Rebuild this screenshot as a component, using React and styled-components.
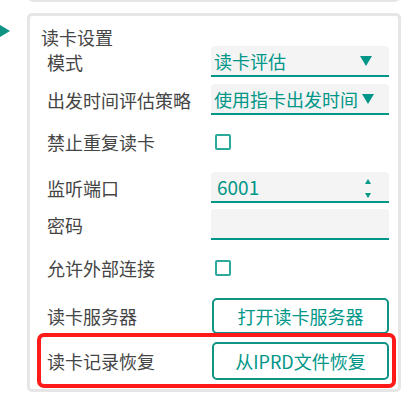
import styled, { createGlobalStyle } from "styled-components";

const GlobalStyle = createGlobalStyle`
  body {
    margin: 0;
    background: #ffffff;
    font-family: "Noto Sans CJK SC", "Noto Sans", sans-serif;
  }
  * {
    box-sizing: border-box;
  }
`;

const teal = "#009688";

const Page = styled.div`
  display: flex;
  width: 417px;
  height: 419px;
  overflow: hidden;
`;

const Side = styled.div`
  width: 27px;
  padding-top: 18px;
  flex-shrink: 0;
`;

const Main = styled.div`
  width: 374px;
  display: flex;
  flex-direction: column;
`;

const PrevBox = styled.div`
  height: 12px;
  margin: -10px 1px 0;
  border: 3px solid #e6e6e6;
  border-radius: 5px;
`;

const Panel = styled.div`
  margin-top: 11px;
  border: 3px solid #e6e6e6;
  border-radius: 5px;
  padding: 13px 9px 1px 17px;
  display: flex;
  flex-direction: column;
`;

const Title = styled.div`
  margin-left: -6px;
  font-size: 18px;
  line-height: 17px;
  height: 17px;
  color: #454545;
`;

const Row = styled.div`
  display: flex;
  align-items: center;
  height: ${(p) => p.$h || 31}px;
  margin-top: ${(p) => p.$mt || 0}px;
`;

const MarkedRow = styled(Row)`
  margin-left: -10px;
  width: 359px;
  border: 4px solid #ff1a1a;
  border-radius: 7px;
  padding-left: 6px;
`;

const Label = styled.div`
  width: 164px;
  flex-shrink: 0;
  font-size: 18px;
  line-height: 1;
  color: #454545;
`;

const Field = styled.div`
  width: 178px;
  height: 31px;
  display: flex;
  align-items: center;
  justify-content: space-between;
  padding: 0 ${(p) => p.$pr || 17}px 0 ${(p) => p.$pl || 3}px;
  background: #f4f4f4;
  border-bottom: 2px solid ${teal};
  border-radius: 4px 4px 0 0;
  color: ${teal};
  font-size: ${(p) => p.$fs || 18}px;
  white-space: nowrap;
  line-height: 1;
`;

const Spinner = styled.div`
  display: flex;
  flex-direction: column;
  justify-content: space-between;
  height: 22px;
  padding-top: 3px;
`;

const Check = styled.div`
  width: 16px;
  height: 16px;
  margin-left: 4px;
  border: 2px solid #2aa99c;
  border-radius: 2px;
`;

const Button = styled.button`
  width: 177px;
  height: ${(p) => p.$h || 36}px;
  margin-left: 1px;
  padding: 0;
  background: #ffffff;
  border: 2px solid #0e9384;
  border-radius: 5px;
  color: ${teal};
  font-family: "Noto Sans CJK SC", "Noto Sans", sans-serif;
  font-size: 18px;
  font-weight: 400;
  cursor: pointer;
`;

const Caret = ({ up, w = 12, h = 10 }) => (
  <svg width={w} height={h} viewBox="0 0 12 10">
    <polygon points={up ? "6,0 12,10 0,10" : "0,0 12,0 6,10"} fill={teal} />
  </svg>
);

const App = () => {
  return (
    <Page>
      <GlobalStyle />
      <Side>
        <svg width="10" height="12" viewBox="0 0 10 12">
          <polygon points="0,0 10,6 0,12" fill="#0e9384" />
        </svg>
      </Side>
      <Main>
        <PrevBox />
        <Panel>
          <Title>读卡设置</Title>
          <Row>
            <Label>模式</Label>
            <Field>
              <span>读卡评估</span>
              <Caret />
            </Field>
          </Row>
          <Row $mt={7}>
            <Label>出发时间评估策略</Label>
            <Field $pr={15}>
              <span>使用指卡出发时间</span>
              <Caret />
            </Field>
          </Row>
          <Row $mt={8} $h={38}>
            <Label>禁止重复读卡</Label>
            <Check />
          </Row>
          <Row $mt={11}>
            <Label>监听端口</Label>
            <Field $pl={6} $pr={18} $fs={19}>
              <span>6001</span>
              <Spinner>
                <Caret up w={6} h={5} />
                <Caret w={6} h={5} />
              </Spinner>
            </Field>
          </Row>
          <Row $mt={6}>
            <Label>密码</Label>
            <Field />
          </Row>
          <Row $mt={9} $h={38}>
            <Label>允许外部连接</Label>
            <Check />
          </Row>
          <Row $mt={11} $h={36}>
            <Label>读卡服务器</Label>
            <Button>打开读卡服务器</Button>
          </Row>
          <MarkedRow $mt={-1} $h={55}>
            <Label>读卡记录恢复</Label>
            <Button $h={38}>从IPRD文件恢复</Button>
          </MarkedRow>
        </Panel>
      </Main>
    </Page>
  );
};

export default App;
